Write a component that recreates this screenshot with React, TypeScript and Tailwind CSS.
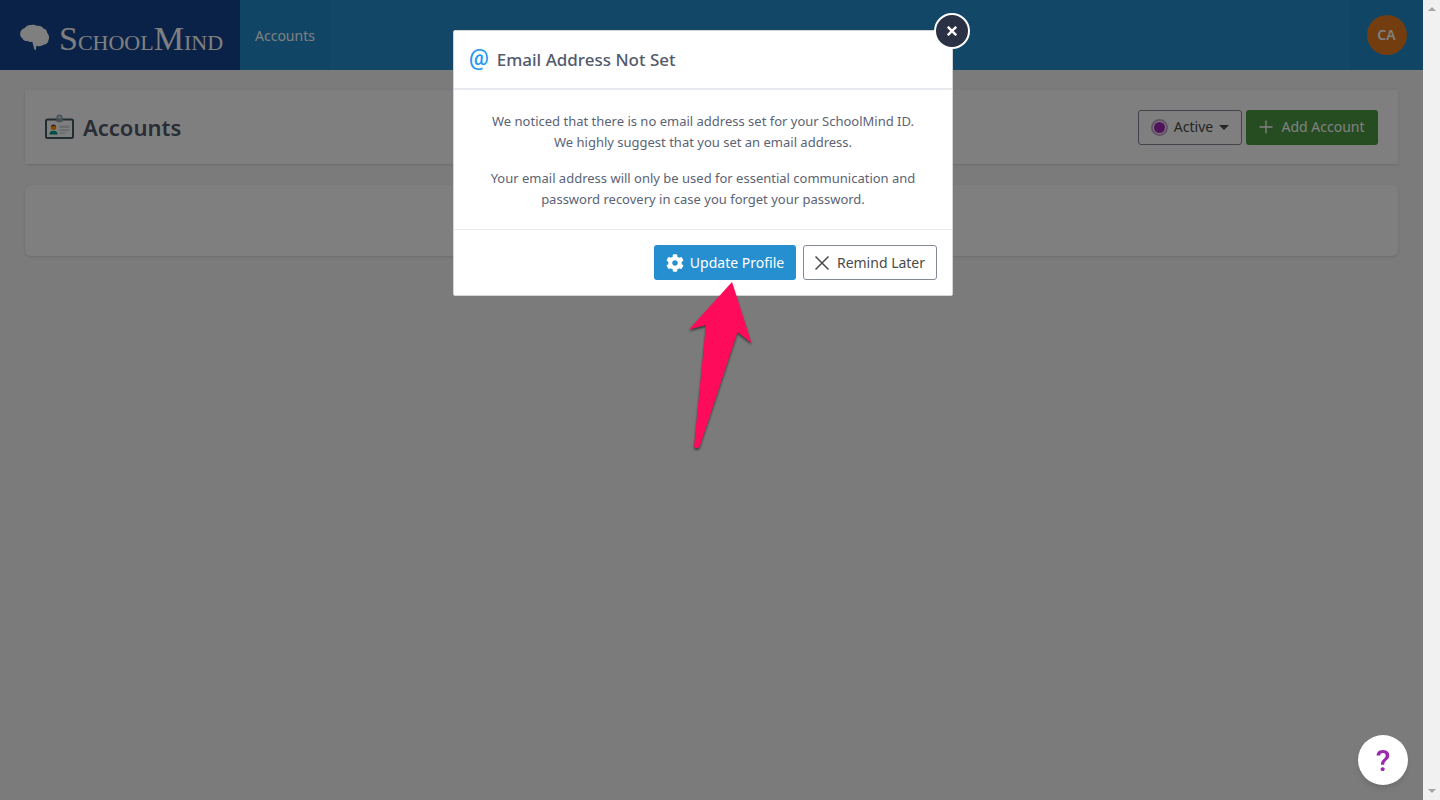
import React, { useState } from 'react'
import { FaCog } from 'react-icons/fa'

const BrainLogo: React.FC = () => (
  <svg viewBox="0 0 30 28" className="w-[30px] h-7" fill="#fff" aria-hidden="true">
    <path d="M.2 10.5C.2 7.5 2.4 5.6 4.8 4.9C6.2 2.9 9 1.6 11.2 2C13.2 1.4 15.6 1.7 17 2.9C19.8 2.5 22.2 3.5 23.4 5.4C25.8 5.9 27.2 7.7 27.1 9.7C29 11.7 29.6 14.7 28.5 16.8C28.5 19.9 26.3 21.6 23.7 21.8C21.7 23.2 19.3 23.4 17.3 22.9L16.4 22.7L15.8 27.2L14.4 26.4L12.9 20.9L12.4 18.7C10.6 19.2 8.8 18.9 7.6 18C5.2 18.3 2.8 17.1 2.4 15.2C.9 14.1-.1 12.6 .2 10.5Z" />
  </svg>
)

const BadgeIcon: React.FC = () => (
  <svg viewBox="0 0 30 26" className="w-[30px] h-[26px]" aria-hidden="true">
    <rect x="1" y="5.5" width="27" height="18.5" rx="1.5" fill="#fff" stroke="#455a64" strokeWidth="2" />
    <circle cx="14.5" cy="3.7" r="2.2" fill="none" stroke="#90a4ae" strokeWidth="1.8" />
    <rect x="11.5" y="4.8" width="6" height="3.4" rx="1" fill="#90a4ae" />
    <circle cx="8.5" cy="13.5" r="2.6" fill="#ff9800" />
    <path d="M5.9 13.2C5.7 9.6 11.3 9.6 11.1 13.2L10.1 11.9L6.9 11.9Z" fill="#543930" />
    <path d="M4.5 20.5C4.5 17.4 6.5 16.8 8.5 16.8S12.5 17.4 12.5 20.5Z" fill="#009688" />
    <path d="M14.5 11.5H24.5V14H14.5ZM14.5 15.3H24.5V17.2H14.5ZM14.5 18.5H20.5V20H14.5Z" fill="#cfd8dc" />
  </svg>
)

const PlusIcon: React.FC = () => (
  <svg viewBox="0 0 14 14" className="w-3.5 h-3.5" stroke="currentColor" strokeWidth="1.4" aria-hidden="true">
    <path d="M7 .5V13.5M.5 7H13.5" />
  </svg>
)

const CrossIcon: React.FC = () => (
  <svg viewBox="0 0 14 14" className="w-3.5 h-3.5" stroke="currentColor" strokeWidth="1.5" aria-hidden="true">
    <path d="M.5 .5L13.5 13.5M13.5 .5L.5 13.5" />
  </svg>
)

const Header: React.FC = () => (
  <header className="flex h-[70px] bg-[#248fd0] text-white">
    <a href="#home" className="flex w-60 items-center gap-[9px] bg-[#144490] pt-1 pl-5">
      <BrainLogo />
      <span className="pt-1 font-['Liberation_Serif',serif] text-[34px] leading-none">
        S<span className="text-[22px]">CHOOL</span>M<span className="text-[22px]">IND</span>
      </span>
    </a>
    <nav className="flex flex-1">
      <a href="#accounts" className="flex items-center bg-[#228aca] px-[15px] pt-0.5 text-sm">
        Accounts
      </a>
    </nav>
    <div className="flex w-[73px] items-center justify-center bg-[#228aca]">
      <button
        type="button"
        className="h-10 w-10 rounded-full bg-[#e67a1e] text-sm font-semibold"
      >
        CA
      </button>
    </div>
  </header>
)

const Scrollbar: React.FC = () => (
  <div className="flex w-[17px] shrink-0 flex-col items-center justify-between bg-[#f1f1f1] py-[7px]">
    <svg viewBox="0 0 8 4" className="w-2 h-1" fill="#a3a3a3" aria-hidden="true">
      <path d="M0 4L4 0L8 4Z" />
    </svg>
    <svg viewBox="0 0 8 4" className="w-2 h-1" fill="#a3a3a3" aria-hidden="true">
      <path d="M0 0L4 4L8 0Z" />
    </svg>
  </div>
)

interface EmailDialogProps {
  onClose: () => void
}

const EmailDialog: React.FC<EmailDialogProps> = ({ onClose }) => (
  <div className="absolute inset-0 flex items-start justify-center bg-black/50 pt-[30px] pr-[17px]">
    <section
      role="dialog"
      aria-labelledby="email-title"
      className="relative w-[500px] rounded-xs border border-[#d5d5d5] bg-white"
    >
      <button
        type="button"
        aria-label="Close"
        onClick={onClose}
        className="absolute -top-[18px] -right-[18px] flex h-9 w-9 items-center justify-center rounded-full border-2 border-white bg-[#2b3144] text-white"
      >
        <svg viewBox="0 0 10 10" className="w-2.5 h-2.5" stroke="currentColor" strokeWidth="2.4" aria-hidden="true">
          <path d="M.8 .8L9.2 9.2M9.2 .8L.8 9.2" />
        </svg>
      </button>
      <div className="flex h-[59px] items-center gap-2 border-b-2 border-[#e6eaee] px-[15px]">
        <span className="pb-1 font-['Roboto',sans-serif] text-[22px] leading-6 font-medium text-[#2196f3]">
          @
        </span>
        <h2 id="email-title" className="text-[17px] font-medium text-[#525a6b]">
          Email Address Not Set
        </h2>
      </div>
      <div className="space-y-[15px] px-5 pt-[21px] pb-[19px] text-center text-[13px] leading-[21px] text-[#5b6375]">
        <p>
          We noticed that there is no email address set for your SchoolMind ID.
          <br />
          We highly suggest that you set an email address.
        </p>
        <p>
          Your email address will only be used for essential communication and
          <br />
          password recovery in case you forget your password.
        </p>
      </div>
      <div className="flex justify-end gap-[7px] border-t border-[#e9ecef] p-[15px]">
        <button
          type="button"
          className="flex h-[35px] w-[142px] items-center justify-center gap-1.5 rounded-[3px] bg-[#268fd0] text-sm text-white"
        >
          <FaCog className="text-lg" />
          Update Profile
        </button>
        <button
          type="button"
          onClick={onClose}
          className="flex h-[35px] w-[134px] items-center justify-center gap-2 rounded-[3px] border border-[#838a96] text-sm text-[#4a4a4a]"
        >
          <CrossIcon />
          Remind Later
        </button>
      </div>
    </section>
  </div>
)

const App: React.FC = () => {
  const [showDialog, setShowDialog] = useState(true)

  return (
    <div className="flex min-h-screen font-['Noto_Sans','Open_Sans',sans-serif]">
      <div className="relative flex-1 bg-[#f6f6f6]">
        <Header />
        <main className="px-[25px] pt-5">
          <div className="flex h-[74px] items-center justify-between bg-white px-5 shadow-sm">
            <h1 className="flex items-center gap-2 text-[22px] font-semibold text-[#525a6b]">
              <BadgeIcon />
              Accounts
            </h1>
            <div className="flex gap-1">
              <button
                type="button"
                className="flex h-[35px] w-[104px] items-center justify-center gap-1.5 rounded-[3px] border border-[#838a96] text-sm text-[#4a4a4a]"
              >
                <span className="flex h-[17px] w-[17px] items-center justify-center rounded-full border-2 border-[#c9a3d0]">
                  <span className="h-[11px] w-[11px] rounded-full bg-[#9c27b0]" />
                </span>
                Active
                <svg viewBox="0 0 10 5" className="w-2.5 h-[5px]" fill="currentColor" aria-hidden="true">
                  <path d="M0 0L5 5L10 0Z" />
                </svg>
              </button>
              <button
                type="button"
                className="flex h-[35px] w-[132px] items-center justify-center gap-2 rounded-[3px] bg-[#4c9a44] text-sm text-white"
              >
                <PlusIcon />
                Add Account
              </button>
            </div>
          </div>
          <div className="mt-[21px] h-[71px] rounded-md bg-white shadow-sm" />
        </main>
        {showDialog && <EmailDialog onClose={() => setShowDialog(false)} />}
        <svg
          viewBox="0 0 70 176"
          className="absolute top-[278px] left-[686px] w-[70px] h-44 drop-shadow-[0_2px_1px_rgb(0_0_0/0.5)]"
          fill="#ff0b5c"
          aria-hidden="true"
        >
          <path d="M46 4L65.5 65L51.5 54L13.5 169Q11 171 8 169L20 47L3 51.5Z" />
        </svg>
        <button
          type="button"
          aria-label="Help"
          className="fixed right-8 bottom-[15px] h-[50px] w-[50px] rounded-full bg-white font-['Roboto',sans-serif] text-[30px] font-medium text-[#9c27b0] shadow-md"
        >
          ?
        </button>
      </div>
      <Scrollbar />
    </div>
  )
}

export default App
